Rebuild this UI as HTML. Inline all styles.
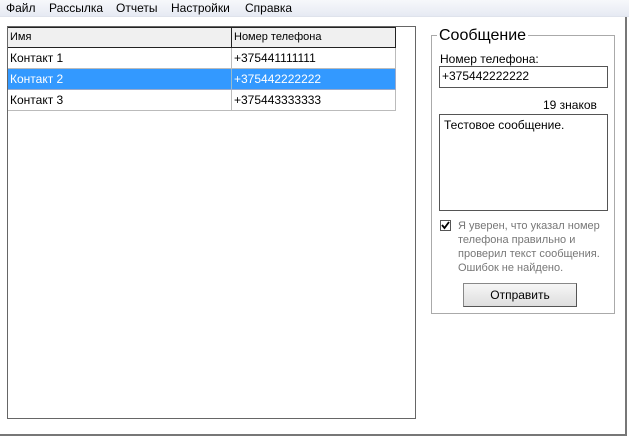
<!DOCTYPE html>
<html><head><style>
*{margin:0;padding:0;box-sizing:border-box}
body{width:629px;height:438px;background:#fff;position:relative;overflow:hidden;font-family:"Liberation Sans",sans-serif;font-size:12px;color:#000}
.menu{position:absolute;left:0;top:0;width:629px;height:17px;background:linear-gradient(#f7f8fb,#e6eaf3);border-bottom:1px solid #dfe3ec}
.menu span{position:absolute;top:1px;font-size:12px}
.a{position:absolute}
.win{left:0;top:17px;width:627px;height:419px;border-right:2px solid #777;border-bottom:2px solid #777}
.list{left:7px;top:26px;width:409px;height:393px;border:1px solid #666}
.row{position:absolute;left:8px;width:388px;height:21px;border-bottom:1px solid #bbb;border-right:1px solid #bbb}
.row span{position:absolute;top:3px}
.c1{left:2px}.c2{left:226px}
.div{position:absolute;left:223px;top:0;width:1px;height:100%;background:#bbb}
</style></head><body>
<div class="menu">
<span style="left:6px">Файл</span><span style="left:49px">Рассылка</span><span style="left:116px">Отчеты</span><span style="left:171px">Настройки</span><span style="left:245px">Справка</span>
</div>
<div class="a win"></div>
<div class="a list"></div>
<div class="row" style="top:27px;height:21px;background:#f0f0f0;border:1px solid #222;border-left:none"><span class="c1" style="font-size:11px">Имя</span><div class="div" style="background:#222"></div><span class="c2" style="font-size:11px">Номер телефона</span></div>
<div class="row" style="top:48px"><span class="c1">Контакт 1</span><div class="div"></div><span class="c2">+375441111111</span></div>
<div class="row" style="top:69px;background:#3399ff;color:#fff;border-color:#9ac"><span class="c1">Контакт 2</span><div class="div" style="background:#9bc"></div><span class="c2">+375442222222</span></div>
<div class="row" style="top:90px"><span class="c1">Контакт 3</span><div class="div"></div><span class="c2">+375443333333</span></div>

<div class="a" style="left:431px;top:35px;width:184px;height:279px;border:1px solid #aaa"></div>
<div class="a" style="left:437px;top:27px;background:#fff;padding:0 2px;font-size:16px">Сообщение</div>
<div class="a" style="left:440px;top:52px">Номер телефона:</div>
<div class="a" style="left:439px;top:66px;width:169px;height:22px;border:1px solid #555;padding:2px 2px;font-size:12px">+375442222222</div>
<div class="a" style="left:543px;top:98px">19 знаков</div>
<div class="a" style="left:439px;top:114px;width:169px;height:97px;border:1px solid #555;padding:3px 4px">Тестовое сообщение.</div>
<div class="a" style="left:440px;top:220px;width:11px;height:11px;border:1px solid #555;background:#fff">
<svg width="9" height="9" style="position:absolute;left:0;top:0"><path d="M1 4 L3.5 7 L8 1" stroke="#000" stroke-width="1.8" fill="none"/></svg></div>
<div class="a" style="left:458px;top:219px;font-size:11px;line-height:14px;color:#777;width:155px">Я уверен, что указал номер<br>телефона правильно и<br>проверил текст сообщения.<br>Ошибок не найдено.</div>
<div class="a" style="left:463px;top:283px;width:114px;height:24px;border:1px solid #888;border-right-color:#555;border-bottom-color:#555;background:linear-gradient(#f6f6f6,#dedede);text-align:center;line-height:22px">Отправить</div>
</body></html>
